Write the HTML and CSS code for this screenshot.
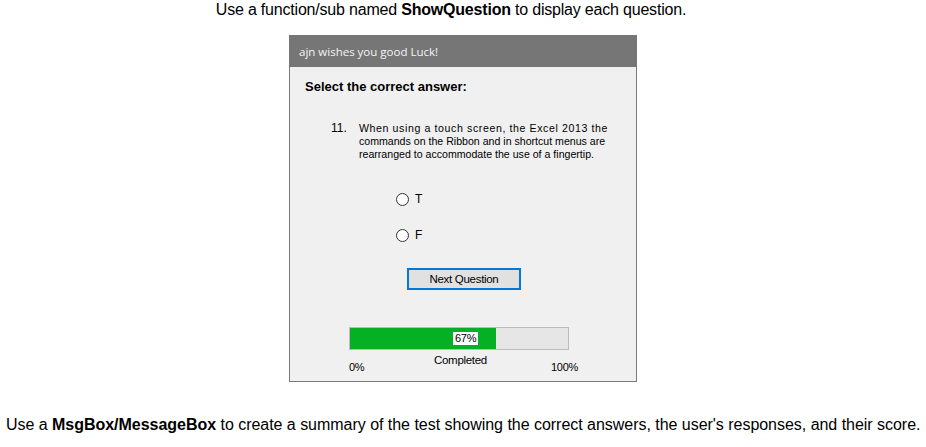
FILE: index.html
```html
<!DOCTYPE html>
<html>
<head>
<meta charset="utf-8">
<link rel="stylesheet" href="styles.css">
</head>
<body>
<p class="caption top">Use a function/sub named <b>ShowQuestion</b> to display each question.</p>
<div class="window">
  <div class="titlebar">ajn wishes you good Luck!</div>
  <div class="client">
    <div class="heading">Select the correct answer:</div>
    <div class="question">
      <span class="qnum">11.</span>
      <span class="qtext"><span class="qline wide">When using a touch screen, the Excel 2013 the</span><span class="qline">commands on the Ribbon and in shortcut menus are</span><span class="qline">rearranged to accommodate the use of a fingertip.</span></span>
    </div>
    <div class="options">
      <label class="option"><span class="radio"></span>T</label>
      <label class="option"><span class="radio"></span>F</label>
    </div>
    <div class="btnrow"><button class="btn">Next Question</button></div>
    <div class="progress-area">
      <div class="progress">
        <div class="fill" style="width: 67%"></div>
        <span class="pct">67%</span>
      </div>
      <div class="scale">
        <span class="s0">0%</span>
        <span class="completed">Completed</span>
        <span class="s100">100%</span>
      </div>
    </div>
  </div>
</div>
<p class="caption bottom">Use a <b>MsgBox/MessageBox</b> to create a summary of the test showing the correct answers, the user's responses, and their score.</p>
</body>
</html>
```
FILE: styles.css
```css
html, body { margin: 0; padding: 0; background: #ffffff; }
body { font-family: "Liberation Sans", Arial, sans-serif; color: #000; }

.caption { margin: 0; font-size: 16px; line-height: 18px; }
.caption.top { padding-top: 1px; text-align: center; padding-right: 24px; height: 35px; box-sizing: border-box; letter-spacing: -0.2px; }
.caption.bottom { margin-top: 34px; padding-left: 6px; letter-spacing: -0.03px; white-space: nowrap; }

.window {
  margin-left: 289px;
  width: 348px;
  height: 347px;
  box-sizing: border-box;
  border: 1px solid #7a7a7a;
  border-top: none;
  background: #f0f0f0;
  display: flex;
  flex-direction: column;
}
.titlebar {
  height: 32px;
  background: #767676;
  color: #f4f4f4;
  font-family: "Open Sans", "Noto Sans", sans-serif;
  font-size: 11.5px;
  line-height: 33px;
  padding-left: 10px;
  margin: 0 -1px;
}
.client { flex: 1; display: flex; flex-direction: column; }
.heading {
  font-weight: bold;
  font-size: 13px;
  line-height: 16px;
  margin: 12px 0 0 15px;
  letter-spacing: 0;
}
.question {
  display: flex;
  margin: 27px 0 0 41px;
  font-size: 10.6px;
  line-height: 13px;
}
.qnum { width: 28px; flex: none; font-size: 12px; }
.qtext { white-space: nowrap; display: flex; flex-direction: column; }
.qline { display: block; }
.qline.wide { letter-spacing: 0.6px; }
.options { display: flex; flex-direction: column; gap: 23px; margin: 32px 0 0 106px; }
.option { display: flex; align-items: center; gap: 6px; font-size: 12px; line-height: 13px; }
.radio {
  width: 11px; height: 11px; border: 1px solid #333; border-radius: 50%; background: #fff; display: inline-block;
}
.btnrow { margin: 26px 0 0 117px; }
.btn {
  width: 114px; height: 22px; box-sizing: border-box; border: 2px solid #0078d7; background: #e1e1e1;
  font-family: "Liberation Sans", Arial, sans-serif; font-size: 11.5px; padding: 0; color: #000;
  letter-spacing: -0.3px;
}
.progress-area { margin: 37px 0 0 59px; width: 229px; }
.progress {
  position: relative;
  width: 220px; height: 23px; box-sizing: border-box;
  border: 1px solid #bcbcbc; background: #e6e6e6;
}
.fill { height: 100%; background: #06b025; }
.pct {
  position: absolute; left: 103px; top: 4px;
  background: #fff; font-size: 11px; line-height: 13px; padding: 0 2px; letter-spacing: -0.3px;
}
.scale { position: relative; height: 26px; font-size: 11px; letter-spacing: -0.3px; }
.scale span { position: absolute; }
.s0 { left: 0; top: 11px; }
.completed { left: 85px; top: 4px; font-size: 11.5px; }
.s100 { left: 202px; top: 11px; }
```
